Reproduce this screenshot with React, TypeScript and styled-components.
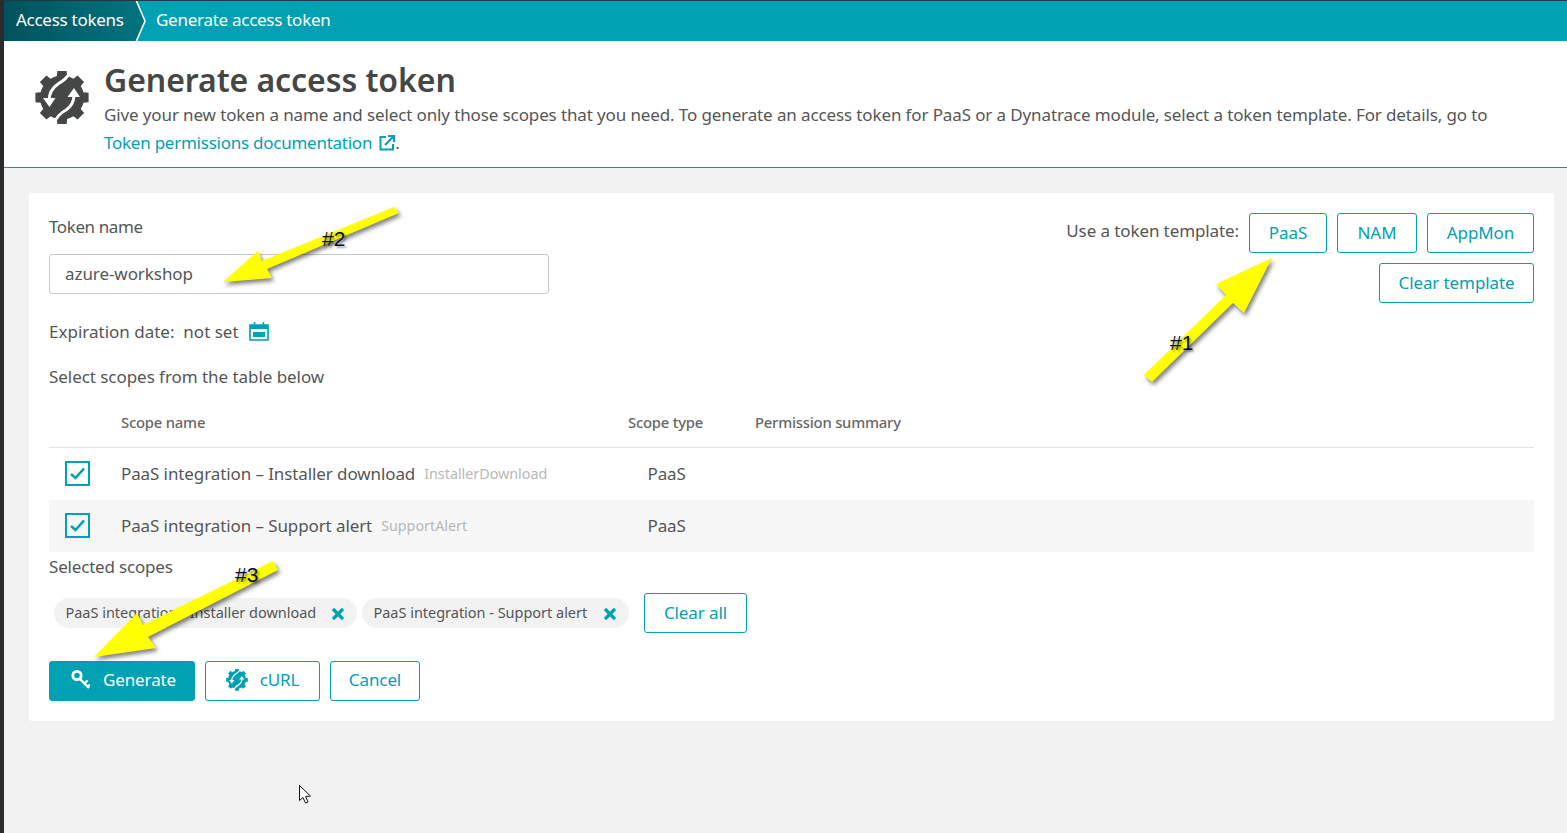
import React from "react";
import styled, { createGlobalStyle } from "styled-components";

const teal = "#00a1b2";
const textColor = "#555656";
const fontStack = `"Noto Sans", "Open Sans", sans-serif`;

const GlobalStyle = createGlobalStyle`
  html, body {
    margin: 0;
    padding: 0;
    height: 833px;
    overflow: hidden;
    background: #f2f2f2;
    font-family: ${fontStack};
    color: ${textColor};
  }
  * { box-sizing: border-box; }
`;

const Frame = styled.div`
  position: relative;
  width: 1567px;
  height: 833px;
  border-left: 4px solid #2b2b2b;
  border-top: 1px solid #1c3a3f;
  background: #f2f2f2;
`;

const TopBar = styled.nav`
  display: flex;
  align-items: stretch;
  height: 40px;
  background: ${teal};
  color: #fff;
  font-size: 17px;
  letter-spacing: -0.27px;
`;

const CrumbParent = styled.div`
  display: flex;
  align-items: center;
  width: 131px;
  padding: 0 0 3px 12px;
  background: linear-gradient(90deg, #00525c 0%, #00727e 100%);
`;

const CrumbChevron = styled.svg`
  flex: none;
  width: 12px;
  height: 40px;
`;

const CrumbCurrent = styled.div`
  display: flex;
  align-items: center;
  padding: 0 0 3px 9px;
`;

const Header = styled.header`
  display: flex;
  height: 127px;
  padding: 21px 40px 0 31px;
  gap: 15px;
  background: #fff;
  border-bottom: 1px solid #4e7f85;
`;

const HeaderIcon = styled.svg`
  flex: none;
  width: 54px;
  height: 54px;
  margin-top: 9px;
`;

const HeaderText = styled.div`
  min-width: 0;
`;

const Title = styled.h1`
  margin: 0;
  font-size: 32px;
  line-height: 36px;
  font-weight: 600;
  color: #454646;
  letter-spacing: -0.07px;
`;

const Intro = styled.p`
  margin: 3px 0 0;
  font-size: 17px;
  line-height: 28px;
  letter-spacing: -0.12px;
`;

const DocLink = styled.a`
  color: ${teal};
  text-decoration: none;
  letter-spacing: -0.25px;
`;

const LinkIcon = styled.svg`
  width: 16px;
  height: 16px;
  margin-left: 7px;
  vertical-align: -2px;
`;

const Content = styled.main`
  padding: 25px 13px 0 25px;
`;

const Card = styled.section`
  height: 528px;
  padding: 20px;
  background: #fff;
  border-radius: 3px;
`;

const TopRow = styled.div`
  display: flex;
  justify-content: space-between;
  align-items: flex-start;
`;

const FormColumn = styled.div`
  width: 500px;
`;

const Label = styled.div`
  font-size: 17px;
  line-height: 28px;
  letter-spacing: -0.05px;
`;

const TokenLabel = styled(Label)`
  letter-spacing: -0.4px;
`;

const NameInput = styled.div`
  display: flex;
  align-items: center;
  height: 40px;
  margin-top: 13px;
  padding: 0 15px 2px;
  border: 1px solid #c9c9c9;
  border-radius: 3px;
  font-size: 17px;
  letter-spacing: -0.07px;
`;

const ExpiryRow = styled.div`
  display: flex;
  align-items: center;
  height: 24px;
  margin-top: 26px;
  padding-bottom: 2px;
  font-size: 17px;
  letter-spacing: 0;
  gap: 10px;
`;

const CalendarIcon = styled.svg`
  width: 20px;
  height: 20px;
`;

const ScopesHint = styled(Label)`
  height: 24px;
  line-height: 24px;
  margin-top: 21px;
`;

const TemplatePanel = styled.div`
  display: flex;
  flex-direction: column;
  align-items: flex-end;
  gap: 10px;
`;

const TemplateRow = styled.div`
  display: flex;
  align-items: center;
  gap: 10px;
`;

const TemplateLabel = styled.span`
  font-size: 17px;
  letter-spacing: -0.1px;
  margin-top: -5px;
`;

const OutlineButton = styled.button<{ $w: number }>`
  display: inline-flex;
  align-items: center;
  justify-content: center;
  gap: 12px;
  width: ${(p) => p.$w}px;
  height: 40px;
  padding: 0 0 2px;
  background: #fff;
  border: 1px solid ${teal};
  border-radius: 3px;
  color: ${teal};
  font-family: ${fontStack};
  font-size: 17px;
  letter-spacing: -0.1px;
`;

const PrimaryButton = styled(OutlineButton)`
  background: ${teal};
  color: #fff;
  gap: 13px;
`;

const ScopeGrid = styled.div`
  display: grid;
  grid-template-columns: 72px 507px 127px 1fr;
  align-items: center;
  margin-top: 10px;
`;

const HeadCell = styled.div`
  display: flex;
  align-items: center;
  height: 49px;
  padding-bottom: 3px;
  font-size: 14.8px;
  font-weight: 500;
  color: #666;
  letter-spacing: -0.2px;
  border-bottom: 1px solid #e3e3e3;
`;

const Cell = styled.div<{ $shade?: boolean; $indent?: boolean }>`
  display: flex;
  align-items: center;
  height: 52px;
  padding-bottom: 2px;
  font-size: 17px;
  letter-spacing: -0.1px;
  background: ${(p) => (p.$shade ? "#f7f7f7" : "#fff")};
  padding-left: ${(p) => (p.$indent ? "19.5px" : "0")};
`;

const CheckCell = styled(Cell)`
  padding-left: 16px;
`;

const CheckBox = styled.span`
  display: flex;
  align-items: center;
  justify-content: center;
  width: 25px;
  height: 25px;
  border: 2px solid ${teal};
`;

const ScopeKey = styled.span`
  margin-left: 9px;
  font-size: 14.3px;
  letter-spacing: 0;
  color: #b7b7b7;
`;

const SelectedLabel = styled(Label)`
  height: 24px;
  line-height: 24px;
  margin-top: 3px;
  letter-spacing: -0.18px;
`;

const ChipRow = styled.div`
  display: flex;
  align-items: center;
  margin-top: 14px;
  padding-left: 5px;
`;

const Chip = styled.span<{ $w: number; $mr: number }>`
  display: flex;
  align-items: center;
  justify-content: space-between;
  width: ${(p) => p.$w}px;
  height: 30px;
  margin-right: ${(p) => p.$mr}px;
  padding: 0 12px 3px 11.5px;
  border-radius: 15px;
  background: #f2f2f2;
  font-size: 14.5px;
  letter-spacing: -0.02px;
  white-space: nowrap;
`;

const ChipClose = styled.svg`
  flex: none;
  width: 14px;
  height: 14px;
  margin-top: 5px;
`;

const ActionRow = styled.div`
  display: flex;
  gap: 10px;
  margin-top: 28px;

  & > button {
    padding-bottom: 4px;
  }
`;

const ButtonIcon = styled.svg`
  width: 22px;
  height: 22px;
  margin-top: 2px;
`;

const AnnotationLayer = styled.svg`
  position: absolute;
  left: -4px;
  top: -1px;
  width: 1567px;
  height: 833px;
  pointer-events: none;
`;

const ArrowShape = styled.polygon`
  fill: #ffff00;
  filter: drop-shadow(2px 3px 2px rgba(0, 0, 0, 0.5));
`;

const AnnotationText = styled.span<{ $x: number; $y: number }>`
  position: absolute;
  left: ${(p) => p.$x - 4}px;
  top: ${(p) => p.$y - 1}px;
  font-family: "Liberation Sans", Arial, sans-serif;
  font-size: 21px;
  line-height: 24px;
  color: #070730;
  text-shadow: 2px 2px 2px rgba(0, 0, 0, 0.35);
`;

const buildGear = (cx: number, cy: number, outer: number, inner: number, teeth: number) => {
  const pts: string[] = [];
  const step = (Math.PI * 2) / teeth;
  for (let i = 0; i < teeth; i++) {
    const a = i * step - Math.PI / 2;
    const offsets: [number, number][] = [
      [-0.5, inner],
      [-0.3, inner],
      [-0.22, outer],
      [0.22, outer],
      [0.3, inner],
    ];
    offsets.forEach(([o, r]) => {
      const t = a + o * step;
      pts.push(`${(cx + r * Math.cos(t)).toFixed(2)} ${(cy + r * Math.sin(t)).toFixed(2)}`);
    });
  }
  return `M${pts.join("L")}Z`;
};

const gearPath = buildGear(32, 32.5, 27, 22, 8);

function TokenGear({ color, cut }: { color: string; cut: string }) {
  return (
    <>
      <path d={gearPath} fill={color} />
      <path d="M42 3C38 13 33 16 28 19C22 23 19 29 19 36" fill="none" stroke={cut} strokeWidth="3" />
      <path d="M13 33L25.500 33L19.500 42Z" fill={cut} />
      <path d="M22 62C26 52 30 48 36 45C42 41 44 35 44 30" fill="none" stroke={cut} strokeWidth="3" />
      <path d="M37.500 32L50 32L44 23Z" fill={cut} />
    </>
  );
}

const XMark = () => (
  <ChipClose viewBox="0 0 14 14">
    <path d="M2 2L12 12M12 2L2 12" stroke={teal} strokeWidth="3.2" fill="none" />
  </ChipClose>
);

const Tick = () => (
  <svg width="17" height="15" viewBox="0 0 17 15">
    <path d="M2 8L6.500 12L15 2.500" stroke={teal} strokeWidth="2.6" fill="none" />
  </svg>
);

export default function App() {
  return (
    <>
      <GlobalStyle />
      <Frame>
        <TopBar>
          <CrumbParent>Access tokens</CrumbParent>
          <CrumbChevron viewBox="0 0 12 40">
            <path d="M0 -1L1 -1L10 20L1 41L0 41Z" fill="#00727e" />
            <path d="M1 -1L10 20L1 41" fill="none" stroke="#fff" strokeWidth="1.6" />
          </CrumbChevron>
          <CrumbCurrent>Generate access token</CrumbCurrent>
        </TopBar>

        <Header>
          <HeaderIcon viewBox="5 6 54 54">
            <TokenGear color="#454646" cut="#fff" />
          </HeaderIcon>
          <HeaderText>
            <Title>Generate access token</Title>
            <Intro>
              Give your new token a name and select only those scopes that you need. To generate an access token for
              PaaS or a Dynatrace module, select a token template. For details, go to
              <br />
              <DocLink href="#">
                Token permissions documentation
                <LinkIcon viewBox="0 0 16 16">
                  <path d="M7 2H1.500V14.500H14V9" fill="none" stroke={teal} strokeWidth="2" />
                  <path d="M6 10L14 2M9 1H15V7" fill="none" stroke={teal} strokeWidth="2" />
                </LinkIcon>
              </DocLink>
              .
            </Intro>
          </HeaderText>
        </Header>

        <Content>
          <Card>
            <TopRow>
              <FormColumn>
                <TokenLabel>Token name</TokenLabel>
                <NameInput>azure-workshop</NameInput>
                <ExpiryRow>
                  <span>Expiration date:&nbsp; not set</span>
                  <CalendarIcon viewBox="0 0 20 20">
                    <path d="M1 4H19V19H1Z" fill="none" stroke={teal} strokeWidth="1.6" />
                    <path d="M1 4H19V8H1ZM4 11H16V16H4Z" fill={teal} />
                    <path d="M5.500 1V6M14.500 1V6" stroke={teal} strokeWidth="1.6" />
                  </CalendarIcon>
                </ExpiryRow>
                <ScopesHint>Select scopes from the table below</ScopesHint>
              </FormColumn>
              <TemplatePanel>
                <TemplateRow>
                  <TemplateLabel>Use a token template:</TemplateLabel>
                  <OutlineButton $w={78}>PaaS</OutlineButton>
                  <OutlineButton $w={80}>NAM</OutlineButton>
                  <OutlineButton $w={107}>AppMon</OutlineButton>
                </TemplateRow>
                <OutlineButton $w={155}>Clear template</OutlineButton>
              </TemplatePanel>
            </TopRow>

            <ScopeGrid>
              <HeadCell />
              <HeadCell>Scope name</HeadCell>
              <HeadCell>Scope type</HeadCell>
              <HeadCell>Permission summary</HeadCell>

              <CheckCell>
                <CheckBox>
                  <Tick />
                </CheckBox>
              </CheckCell>
              <Cell>
                PaaS integration – Installer download<ScopeKey>InstallerDownload</ScopeKey>
              </Cell>
              <Cell $indent>PaaS</Cell>
              <Cell />

              <CheckCell $shade>
                <CheckBox>
                  <Tick />
                </CheckBox>
              </CheckCell>
              <Cell $shade>
                PaaS integration – Support alert<ScopeKey>SupportAlert</ScopeKey>
              </Cell>
              <Cell $shade $indent>
                PaaS
              </Cell>
              <Cell $shade />
            </ScopeGrid>

            <SelectedLabel>Selected scopes</SelectedLabel>
            <ChipRow>
              <Chip $w={303} $mr={5}>
                PaaS integration - Installer download
                <XMark />
              </Chip>
              <Chip $w={267} $mr={15}>
                PaaS integration - Support alert
                <XMark />
              </Chip>
              <OutlineButton $w={103}>Clear all</OutlineButton>
            </ChipRow>

            <ActionRow>
              <PrimaryButton $w={146}>
                <ButtonIcon viewBox="-2 0 22 22">
                  <circle cx="7" cy="6.500" r="4.200" fill="none" stroke="#fff" strokeWidth="2.800" />
                  <path d="M10 10L19 19M15 14L17.500 11.500M18 17.500L20 15.500" fill="none" stroke="#fff" strokeWidth="2.400" />
                </ButtonIcon>
                Generate
              </PrimaryButton>
              <OutlineButton $w={115}>
                <ButtonIcon viewBox="5 6 54 54">
                  <TokenGear color={teal} cut="#fff" />
                </ButtonIcon>
                cURL
              </OutlineButton>
              <OutlineButton $w={90}>Cancel</OutlineButton>
            </ActionRow>
          </Card>
        </Content>

        <AnnotationLayer viewBox="0 0 1567 833">
          <ArrowShape points="1144,375 1226,295 1216,284 1272,258 1244,313 1233,303 1152,382" />
          <ArrowShape points="394,207 399,213 267,269 272,278 223,282 258,251 262,261" />
          <ArrowShape points="273,561 278,570 148,637 156,648 94,657 137,613 143,625" />
          <path d="M299.500 785.500V800.500L303 797.500L305.500 803L308 802L305.500 796.500L310.500 796Z" fill="#fff" stroke="#111" strokeWidth="1" />
        </AnnotationLayer>
        <AnnotationText $x={1170} $y={331}>#1</AnnotationText>
        <AnnotationText $x={322} $y={227}>#2</AnnotationText>
        <AnnotationText $x={235} $y={563}>#3</AnnotationText>
      </Frame>
    </>
  );
}
